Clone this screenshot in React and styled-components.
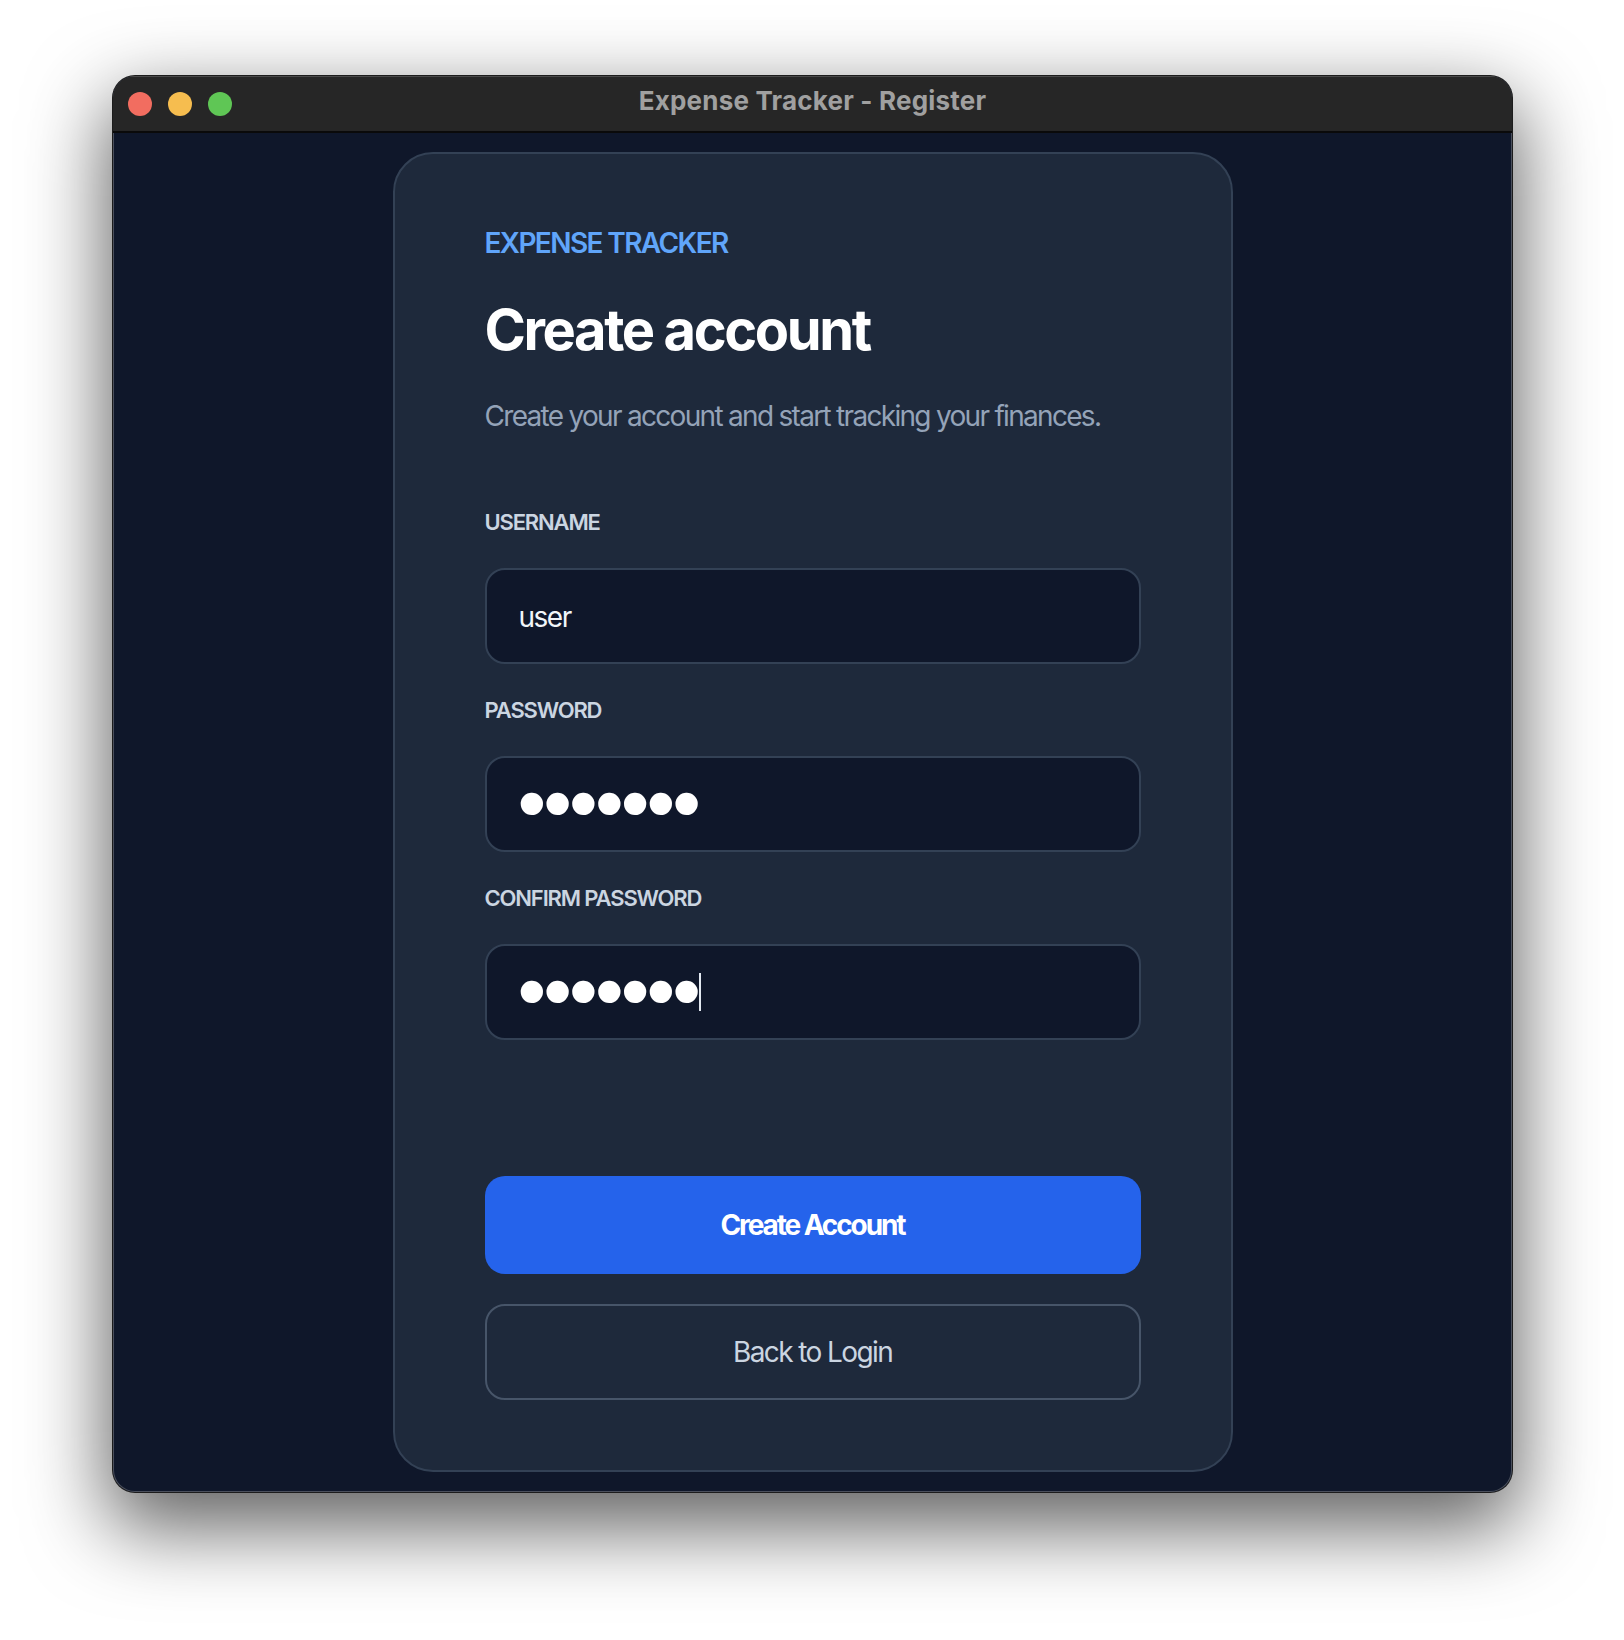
import React from "react";
import styled, { createGlobalStyle } from "styled-components";

const GlobalStyle = createGlobalStyle`
    html, body {
        margin: 0;
        padding: 0;
        background: #ffffff;
    }
    * {
        box-sizing: border-box;
    }
`;

const Page = styled.div`
    width: 1624px;
    height: 1640px;
    padding: 76px 0 0 113px;
    overflow: hidden;
    font-family: Inter, "Noto Sans", sans-serif;
`;

const Window = styled.div`
    width: 1399px;
    height: 1416px;
    display: flex;
    flex-direction: column;
    background: #0f172a;
    border-radius: 22px;
    overflow: hidden;
    box-shadow: inset 0 0 0 1px #4a4f5c, 0 0 0 1px #1c1c1c, 0 30px 80px 6px rgba(0, 0, 0, 0.62);
`;

const TitleBar = styled.div`
    height: 57px;
    flex: none;
    display: grid;
    grid-template-columns: 1fr auto 1fr;
    align-items: center;
    padding: 0 15px;
    background: #262626;
    border-top: 1px solid #4a4a4a;
    border-bottom: 2px solid #0a0a0a;
`;

const Lights = styled.div`
    display: flex;
    gap: 16px;
`;

const Light = styled.span`
    width: 24px;
    height: 24px;
    border-radius: 50%;
    background: ${(p) => p.color};
`;

const WindowTitle = styled.div`
    color: #a0a0a0;
    font-size: 26px;
    font-weight: 700;
    letter-spacing: 0.2px;
    margin-top: -8px;
`;

const Content = styled.div`
    flex: 1;
    display: flex;
    justify-content: center;
    padding-top: 19px;
`;

const Card = styled.div`
    width: 840px;
    height: 1320px;
    padding: 72px 90px;
    display: flex;
    flex-direction: column;
    background: #1e293b;
    border: 2px solid #334155;
    border-radius: 40px;
`;

const Eyebrow = styled.div`
    color: #60a5fa;
    font-size: 28px;
    font-weight: 600;
    line-height: 34px;
    letter-spacing: -1.6px;
`;

const Heading = styled.h1`
    margin: 36px 0 0;
    color: #ffffff;
    font-size: 56px;
    font-weight: 700;
    line-height: 68px;
    letter-spacing: -2.4px;
`;

const Subtitle = styled.p`
    margin: 32px 0 0;
    color: #94a3b8;
    font-size: 28px;
    line-height: 40px;
    letter-spacing: -1.7px;
    white-space: nowrap;
`;

const Form = styled.div`
    margin-top: 72px;
    display: flex;
    flex-direction: column;
    gap: 32px;
`;

const Field = styled.div`
    display: flex;
    flex-direction: column;
    gap: 32px;
`;

const Label = styled.label`
    color: #cbd5e1;
    font-size: 22px;
    font-weight: 600;
    line-height: 28px;
    letter-spacing: -1.15px;
`;

const InputBox = styled.div`
    height: 96px;
    display: flex;
    align-items: center;
    padding: 0 32px;
    background: #0f172a;
    border: 2px solid #334155;
    border-radius: 20px;
    color: #f1f5f9;
    font-size: 28px;
    letter-spacing: -1.5px;
`;

const InputText = styled.span`
    padding-top: 2px;
`;

const Dots = styled.span`
    margin: -2px 0 0 -1px;
    font-family: "Liberation Sans", sans-serif;
    font-size: 82px;
    line-height: 40px;
    letter-spacing: -2.9px;
    color: #ffffff;
`;

const Caret = styled.span`
    width: 2px;
    height: 38px;
    margin-left: 1px;
    background: #e2e8f0;
`;

const Actions = styled.div`
    margin-top: 136px;
    display: flex;
    flex-direction: column;
    gap: 30px;
`;

const Button = styled.button`
    width: 100%;
    height: ${(p) => (p.$primary ? "98px" : "96px")};
    border-radius: 20px;
    border: ${(p) => (p.$primary ? "none" : "2px solid #475569")};
    background: ${(p) => (p.$primary ? "#2563eb" : "transparent")};
    color: ${(p) => (p.$primary ? "#ffffff" : "#cbd5e1")};
    font-family: inherit;
    font-size: 28px;
    font-weight: ${(p) => (p.$primary ? 700 : 400)};
    letter-spacing: ${(p) => (p.$primary ? "-2.1px" : "-1.6px")};
`;

const App = () => {
    return (
        <Page>
            <GlobalStyle />
            <Window>
                <TitleBar>
                    <Lights>
                        <Light color="#f26d60" />
                        <Light color="#f6bd4f" />
                        <Light color="#5fc655" />
                    </Lights>
                    <WindowTitle>Expense Tracker - Register</WindowTitle>
                </TitleBar>
                <Content>
                    <Card>
                        <Eyebrow>EXPENSE TRACKER</Eyebrow>
                        <Heading>Create account</Heading>
                        <Subtitle>Create your account and start tracking your finances.</Subtitle>
                        <Form>
                            <Field>
                                <Label>USERNAME</Label>
                                <InputBox><InputText>user</InputText></InputBox>
                            </Field>
                            <Field>
                                <Label>PASSWORD</Label>
                                <InputBox><Dots>•••••••</Dots></InputBox>
                            </Field>
                            <Field>
                                <Label>CONFIRM PASSWORD</Label>
                                <InputBox><Dots>•••••••</Dots><Caret /></InputBox>
                            </Field>
                        </Form>
                        <Actions>
                            <Button $primary>Create Account</Button>
                            <Button>Back to Login</Button>
                        </Actions>
                    </Card>
                </Content>
            </Window>
        </Page>
    );
};

export default App;
